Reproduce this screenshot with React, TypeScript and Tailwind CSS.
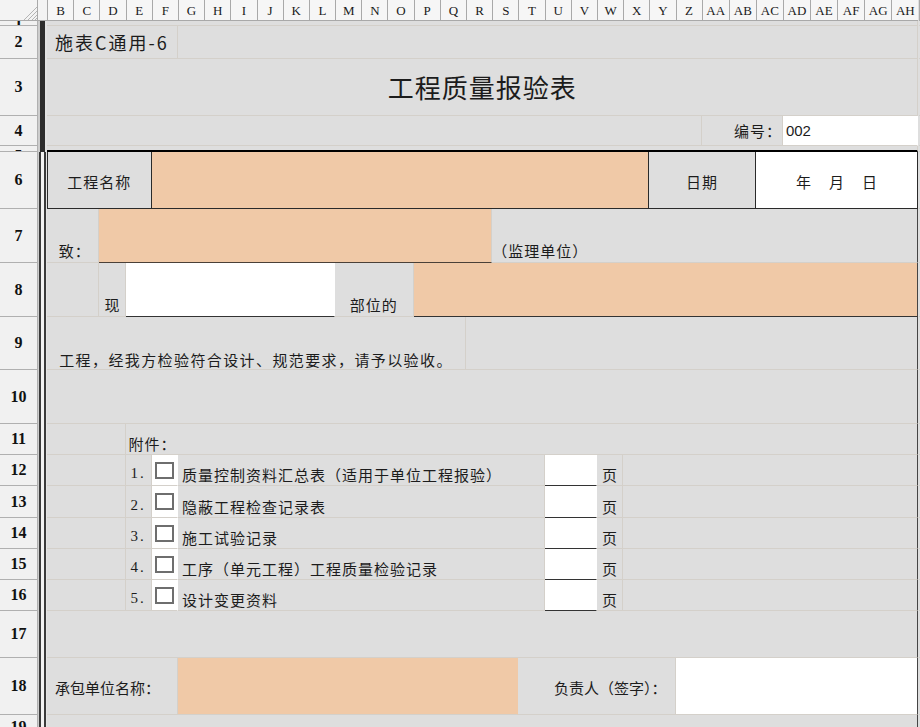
import type { ReactNode } from "react";

const cols = [
  "B", "C", "D", "E", "F", "G", "H", "I", "J", "K", "L", "M", "N", "O", "P", "Q", "R",
  "S", "T", "U", "V", "W", "X", "Y", "Z", "AA", "AB", "AC", "AD", "AE", "AF", "AG", "AH"
];

const attachments = [
  { no: "1.", text: "质量控制资料汇总表（适用于单位工程报验）", n: 12, h: "h-[31px]" },
  { no: "2.", text: "隐蔽工程检查记录表", n: 13, h: "h-[32px]" },
  { no: "3.", text: "施工试验记录", n: 14, h: "h-[31px]" },
  { no: "4.", text: "工序（单元工程）工程质量检验记录", n: 15, h: "h-[31px]" },
  { no: "5.", text: "设计变更资料", n: 16, h: "h-[31px]" }
];

// light sheet gridline
const line = "border-b border-r border-[#d4d0ca]";

function Corner() {
  return (
    <div className="relative w-[38px] shrink-0 border-b border-r border-[#a9a9a9] bg-[#f3f3f3]">
      <svg width="38" height="21" className="absolute left-0 top-0">
        <g stroke="#b4b4b4" strokeWidth="1">
          <line x1="24" y1="20" x2="37" y2="7" />
          <line x1="28" y1="20" x2="37" y2="11" />
          <line x1="32" y1="20" x2="37" y2="15" />
          <line x1="35" y1="20" x2="37" y2="18" />
        </g>
      </svg>
    </div>
  );
}

function RowHead({ n, align = "items-center" }: { n: number; align?: string }) {
  return (
    <div
      className={`flex w-[38px] shrink-0 justify-center overflow-hidden border-b border-r border-[#b0b0b0] bg-[#f1f1f1] font-['Liberation_Serif',serif] text-[16px] font-bold leading-none text-[#111] ${align}`}
    >
      {n}
    </div>
  );
}

function Sep({ top }: { top?: boolean }) {
  if (top) {
    return (
      <div className="flex w-[9px] shrink-0">
        <div className="w-[2px] bg-[#cdcdcd]" />
        <div className="w-[5px] bg-[#2c2c2c]" />
        <div className="w-[2px] bg-[#e2e2e2]" />
      </div>
    );
  }
  return (
    <div className="flex w-[9px] shrink-0">
      <div className="w-[1px] bg-[#cdcdcd]" />
      <div className="w-[2px] bg-[#3a3a3a]" />
      <div className="w-[3px] bg-[#f2f2f2]" />
      <div className="w-[2px] bg-[#3a3a3a]" />
      <div className="w-[1px] bg-[#e4e4e4]" />
    </div>
  );
}

function Row({
  n,
  h,
  top,
  head,
  children
}: {
  n: number;
  h: string;
  top?: boolean;
  head?: string;
  children: ReactNode;
}) {
  return (
    <div className={`flex shrink-0 ${h}`}>
      <RowHead n={n} align={head} />
      <Sep top={top} />
      <div className="grid w-[872px] shrink-0 grid-cols-[repeat(25,26.2px)_repeat(8,27.08px)]">{children}</div>
      <div className="flex-1 border-b border-[#d4d0ca] bg-[#dedede]" />
    </div>
  );
}

function Cell({ span, className = "", children }: { span: string; className?: string; children?: ReactNode }) {
  return (
    <div className={`flex min-w-0 overflow-hidden whitespace-nowrap ${line} ${span} ${className}`}>{children}</div>
  );
}

export default function App() {
  return (
    <div className="flex h-[727px] w-[920px] flex-col overflow-hidden bg-[#dedede] font-['Noto_Sans_CJK_SC',sans-serif] text-[#1c1c1c]">
      {/* column headers */}
      <div className="flex h-[21px] shrink-0">
        <Corner />
        <div className="w-[9px] shrink-0 border-b border-[#a9a9a9] bg-[#f3f3f3]" />
        <div className="grid w-[872px] shrink-0 grid-cols-[repeat(25,26.2px)_repeat(8,27.08px)]">
          {cols.map((c) => (
            <div
              key={c}
              className="flex items-center justify-center border-b border-l border-[#a9a9a9] bg-[#f6f6f6] pt-[1px] font-['Liberation_Serif',serif] text-[13px] leading-none text-[#1a1a1a]"
            >
              {c}
            </div>
          ))}
        </div>
        <div className="flex-1 border-b border-l border-[#a9a9a9] bg-[#f6f6f6]" />
      </div>

      <Row n={1} h="h-[5px]" top>
        <Cell span="col-[1/34]" />
      </Row>

      <Row n={2} h="h-[33px]" top>
        <Cell span="col-[1/6]" className="items-center pl-[8px] text-[18px] leading-none tracking-[2px]">
          施表C通用-6
        </Cell>
        <Cell span="col-[6/34]" />
      </Row>

      <Row n={3} h="h-[57px]" top>
        <Cell span="col-[1/34]" className="items-center justify-center text-[26px] leading-none tracking-[1px]">
          工程质量报验表
        </Cell>
      </Row>

      <Row n={4} h="h-[30px]" top>
        <Cell span="col-[1/26]" />
        <Cell span="col-[26/29]" className="items-center justify-end text-[15px] leading-none tracking-[1px]">
          编号：
        </Cell>
        <Cell
          span="col-[29/34]"
          className="items-center border-r-white bg-white pl-[3px] font-['Liberation_Sans',sans-serif] text-[15px] leading-none"
        >
          002
        </Cell>
      </Row>

      <Row n={5} h="h-[6px]" top head="items-start pt-[2px]">
        <Cell span="col-[1/34]" className="border-b-2 border-b-black" />
      </Row>

      <Row n={6} h="h-[57px]">
        <Cell
          span="col-[1/5]"
          className="items-center justify-center border-l border-b-[#2a2a2a] border-l-[#2a2a2a] border-r-[#2a2a2a] pt-[2px] text-[15px] leading-none tracking-[1px]"
        >
          工程名称
        </Cell>
        <Cell span="col-[5/24]" className="border-b-[#2a2a2a] border-r-[#2a2a2a] bg-[#f0c9a7]" />
        <Cell
          span="col-[24/28]"
          className="items-center justify-center border-b-[#2a2a2a] border-r-[#2a2a2a] pt-[2px] text-[15px] leading-none tracking-[1px]"
        >
          日期
        </Cell>
        <Cell
          span="col-[28/34]"
          className="items-center justify-center gap-[18px] border-b-[#2a2a2a] border-r-[#2a2a2a] bg-white pt-[2px] text-[15px] leading-none"
        >
          <span>年</span>
          <span>月</span>
          <span>日</span>
        </Cell>
      </Row>

      <Row n={7} h="h-[54px]">
        <Cell span="col-[1/3]" className="items-end justify-center pb-[4px] pl-[4px] text-[15px] leading-none tracking-[1px]">
          致：
        </Cell>
        <Cell span="col-[3/18]" className="border-b-[#4a4038] bg-[#f0c9a7]" />
        <Cell
          span="col-[18/34]"
          className="items-end border-r-[#444] pb-[4px] text-[15px] leading-none tracking-[1px]"
        >
          （监理单位）
        </Cell>
      </Row>

      <Row n={8} h="h-[54px]">
        <Cell span="col-[1/3]" />
        <Cell span="col-[3/4]" className="items-end justify-center pb-[4px] text-[15px] leading-none">
          现
        </Cell>
        <Cell span="col-[4/12]" className="border-b-[#333] border-r-white bg-white" />
        <Cell span="col-[12/15]" className="items-end justify-center pb-[4px] text-[15px] leading-none tracking-[1px]">
          部位的
        </Cell>
        <Cell span="col-[15/34]" className="border-b-[#333] border-r-[#444] bg-[#f0c9a7]" />
      </Row>

      <Row n={9} h="h-[53px]">
        <Cell span="col-[1/17]" className="items-end justify-center pb-[2px] text-[15px] leading-none tracking-[1.4px]">
          工程，经我方检验符合设计、规范要求，请予以验收。
        </Cell>
        <Cell span="col-[17/34]" className="border-r-[#444]" />
      </Row>

      <Row n={10} h="h-[54px]">
        <Cell span="col-[1/34]" className="border-r-[#444]" />
      </Row>

      <Row n={11} h="h-[31px]">
        <Cell span="col-[1/4]" />
        <Cell span="col-[4/34]" className="items-end border-r-[#444] pb-[3px] pl-[3px] text-[15px] leading-none tracking-[1px]">
          附件：
        </Cell>
      </Row>

      {attachments.map((a) => (
        <Row key={a.n} n={a.n} h={a.h}>
          <Cell span="col-[1/4]" />
          <Cell
            span="col-[4/5]"
            className="items-end justify-center pb-[4px] font-['Liberation_Serif',serif] text-[15px] leading-none tracking-[2px]"
          >
            {a.no}
          </Cell>
          <Cell span="col-[5/6]" className="items-center justify-center border-r-white bg-white">
            <div className="h-[17px] w-[19px] border-2 border-[#6e6e6e] bg-white" />
          </Cell>
          <Cell span="col-[6/20]" className="items-end pb-[3px] pl-[4px] text-[15px] leading-none tracking-[1px]">
            {a.text}
          </Cell>
          <Cell span="col-[20/22]" className="border-b-[#333] border-r-white bg-white" />
          <Cell span="col-[22/23]" className="items-end justify-center pb-[3px] text-[15px] leading-none">
            页
          </Cell>
          <Cell span="col-[23/34]" className="border-r-[#444]" />
        </Row>
      ))}

      <Row n={17} h="h-[47px]">
        <Cell span="col-[1/34]" className="border-r-[#444]" />
      </Row>

      <Row n={18} h="h-[57px]">
        <Cell span="col-[1/6]" className="items-center pl-[8px] pt-[3px] text-[15px] leading-none">
          承包单位名称：
        </Cell>
        <Cell span="col-[6/19]" className="border-r-[#f0c9a7] bg-[#f0c9a7]" />
        <Cell span="col-[19/25]" className="items-center justify-end pr-[8px] pt-[3px] text-[15px] leading-none">
          负责人（签字）：
        </Cell>
        <Cell span="col-[25/34]" className="border-r-[#444] bg-white" />
      </Row>

      <Row n={19} h="h-[30px]" head="items-start pt-[4px]">
        <Cell span="col-[1/34]" className="border-r-[#444]" />
      </Row>
    </div>
  );
}
